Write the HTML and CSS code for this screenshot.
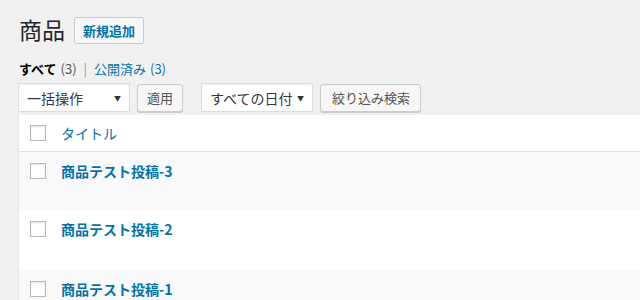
FILE: index.html
```html
<!DOCTYPE html>
<html lang="ja">
<head>
  <meta charset="UTF-8" />
  <title>商品</title>
  <link rel="stylesheet" href="styles.css">
</head>
<body>
  <div class="wrap">
    <!-- Page heading -->
    <div class="heading">
      <h1>商品</h1>
      <a class="add-new" href="#">新規追加</a>
    </div>

    <!-- Status filters -->
    <ul class="subsubsub">
      <li class="current">すべて <span class="count">(3)</span></li>
      <li class="sep">|</li>
      <li><a href="#">公開済み <span class="count">(3)</span></a></li>
    </ul>

    <!-- Bulk actions / filters -->
    <div class="tablenav">
      <div class="select select-bulk"><span>一括操作</span><span class="arrow">▼</span></div>
      <button class="btn">適用</button>
      <div class="select select-date"><span>すべての日付</span><span class="arrow">▼</span></div>
      <button class="btn btn-wide">絞り込み検索</button>
    </div>

    <!-- Posts list -->
    <div class="list">
      <div class="row head">
        <span class="check"></span>
        <span class="col-title">タイトル</span>
      </div>
      <div class="row alt">
        <span class="check"></span>
        <a class="row-title" href="#">商品テスト投稿-3</a>
      </div>
      <div class="row">
        <span class="check"></span>
        <a class="row-title" href="#">商品テスト投稿-2</a>
      </div>
      <div class="row alt">
        <span class="check"></span>
        <a class="row-title" href="#">商品テスト投稿-1</a>
      </div>
    </div>
  </div>
</body>
</html>
```

FILE: styles.css
```css
/* Base */
html, body {
  margin: 0;
  padding: 0;
  background: #f1f1f1;
  color: #444;
  font-family: "Noto Sans CJK JP", "Noto Sans", sans-serif;
  font-size: 13px;
  overflow: hidden;
}
a {
  color: #0073aa;
  text-decoration: none;
}
.wrap {
  padding: 14px 0 0 18px;
}

/* Heading */
.heading {
  display: flex;
  align-items: center;
  gap: 9px;
}
h1 {
  margin: 0 0 0 1px;
  font-size: 23px;
  font-weight: 400;
  line-height: 31px;
  color: #23282d;
}
.add-new {
  display: flex;
  align-items: center;
  justify-content: center;
  width: 68px;
  height: 25px;
  border: 1px solid #ccc;
  border-radius: 2px;
  background: #f7f7f7;
  font-size: 13px;
  font-weight: 700;
  margin-top: 2px;
}

/* Status links */
.subsubsub {
  list-style: none;
  display: flex;
  gap: 7px;
  margin: 14px 0 0 1px;
  padding: 0;
  line-height: 20px;
  color: #666;
}
.subsubsub .current {
  color: #000;
  font-weight: 700;
}
.subsubsub .count {
  color: #555;
  font-weight: 400;
  font-size: 13px;
  margin-left: 1px;
}
.subsubsub a .count {
  color: #0073aa;
}
.subsubsub .sep {
  color: #999;
}

/* Tablenav */
.tablenav {
  display: flex;
  align-items: center;
  margin-top: 4px;
  height: 29px;
}
.select {
  box-sizing: border-box;
  display: flex;
  align-items: center;
  justify-content: space-between;
  height: 29px;
  padding: 0 6px 0 8px;
  border: 1px solid #ddd;
  background: #fff;
  box-shadow: inset 0 1px 2px rgba(0, 0, 0, 0.07);
  font-size: 14px;
  color: #32373c;
}
.select .arrow {
  font-size: 7px;
  color: #333;
  margin-right: 2px;
}
.select-bulk {
  width: 112px;
}
.select-date {
  width: 112px;
  margin-left: 18px;
}
.btn {
  box-sizing: border-box;
  height: 28px;
  margin-left: 7px;
  padding: 0 9px;
  border: 1px solid #ccc;
  border-radius: 3px;
  background: #f7f7f7;
  box-shadow: 0 1px 0 #ccc;
  font-family: inherit;
  font-size: 13px;
  color: #555;
}
.btn-wide {
  padding: 0 10px 0 11px;
}

/* List table */
.list {
  margin-top: 3px;
  border-left: 1px solid #e5e5e5;
  background: #fff;
}
.row {
  display: flex;
  align-items: flex-start;
  gap: 15px;
  height: 58px;
  padding: 11px 0 0 11px;
  box-sizing: border-box;
  background: #fff;
}
.row:nth-child(3) {
  height: 60px;
}
.row.alt {
  background: #f9f9f9;
}
.row.head {
  height: 37px;
  align-items: center;
  padding-top: 0;
  border-bottom: 1px solid #e1e1e1;
}
.check {
  box-sizing: border-box;
  flex: none;
  width: 16px;
  height: 16px;
  border: 1px solid #b4b9be;
  background: #fff;
  box-shadow: inset 0 1px 2px rgba(0, 0, 0, 0.1);
}
.col-title {
  font-size: 14px;
  color: #0073aa;
}
.row-title {
  font-size: 14px;
  font-weight: 700;
  line-height: 16px;
}
```
